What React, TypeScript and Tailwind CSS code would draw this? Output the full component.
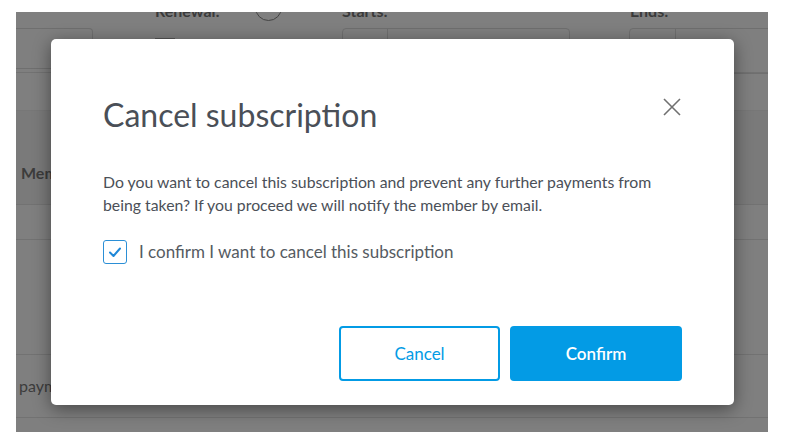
import React from "react";

export default function App() {
  return (
    <div className="w-[786px] h-[442px] bg-white pl-[16px] pt-[12px]" style={{ fontFamily: "Lato, 'Open Sans', sans-serif" }}>
      <div className="relative w-[752px] h-[420px] bg-[#7f7f7f] overflow-hidden">
        {/* dimmed page content */}
        <div className="flex flex-col">
          <div className="h-[16px] flex text-[16px] font-bold text-[#3a3a3a]">
            <div className="w-[139px] shrink-0" />
            <div className="w-[100px] shrink-0 -mt-[11px] leading-[20px]">Renewal:</div>
            <div className="shrink-0 -mt-[18px] w-[27px] h-[27px] rounded-full border border-[#444]" />
            <div className="w-[60px] shrink-0" />
            <div className="w-[288px] shrink-0 -mt-[11px] leading-[20px]">Starts:</div>
            <div className="shrink-0 -mt-[11px] leading-[20px]">Ends:</div>
          </div>
          <div className="h-[45px] flex border-b border-[#727272]">
            <div className="shrink-0 w-[77px] h-[41px] border border-l-0 border-[#6f6f6f] rounded-r-[4px]" />
            <div className="shrink-0 ml-[62px] mt-[10px] w-[20px] h-[6px] bg-[#555]" />
            <div className="shrink-0 ml-[167px] w-[228px] h-[46px] border border-[#6f6f6f] rounded-[4px] flex">
              <div className="w-[45px] border-r border-[#6f6f6f]" />
            </div>
            <div className="shrink-0 ml-[59px] w-[200px] h-[46px] border border-[#6f6f6f] rounded-[4px] flex">
              <div className="w-[46px] border-r border-[#6f6f6f]" />
            </div>
          </div>
          <div className="h-[37px]" />
          <div className="h-[95px] bg-[#7a7a7a] border-t border-[#777] border-b border-b-[#727272] flex items-center pl-[5px] pt-[30px] text-[16px] font-bold text-[#3c3c3c]">Member</div>
          <div className="h-[35px] border-b border-[#727272]" />
          <div className="h-[115px] border-b border-[#727272]" />
          <div className="h-[63px] border-b border-[#727272] flex items-center pl-[3px] text-[16px] text-[#3c3c3c]">payments</div>
        </div>

        {/* modal */}
        <div className="absolute left-[35px] top-[27px] w-[683px] h-[366px] bg-white rounded-[5px] shadow-[0_4px_18px_rgba(0,0,0,0.45)] flex flex-col pl-[52px] pr-[52px] pb-[24px]">
          <div className="flex items-start justify-between pt-[58px]">
            <h2 className="text-[32px] leading-[36px] text-[#4a4f57]">Cancel subscription</h2>
            <button className="-mr-[2px] -mt-[2px] w-[24px] h-[24px] flex items-center justify-center">
              <svg width="20" height="20" viewBox="0 0 20 20" fill="none" stroke="#707070" strokeWidth="1.6">
                <path d="M2 2 L18 18 M18 2 L2 18" />
              </svg>
            </button>
          </div>
          <p className="mt-[37px] text-[15.8px] leading-[23px] text-[#4b5058]">
            Do you want to cancel this subscription and prevent any further payments from
            <br />
            being taken? If you proceed we will notify the member by email.
          </p>
          <label className="mt-[24px] flex items-center gap-[12px]">
            <span className="w-[24px] h-[24px] rounded-[3px] border-[1.5px] border-[#2b8fd6] flex items-center justify-center">
              <svg width="16" height="16" viewBox="0 0 16 16" fill="none" stroke="#1f88d8" strokeWidth="2" strokeLinecap="round" strokeLinejoin="round">
                <path d="M3 8.5 L6.5 12 L13 4.5" />
              </svg>
            </span>
            <span className="text-[17px] leading-[24px] text-[#555b62]">I confirm I want to cancel this subscription</span>
          </label>
          <div className="mt-auto flex justify-end gap-[10px]">
            <button className="w-[161px] h-[55px] rounded-[4px] border-2 border-[#039be5] text-[#039be5] text-[17px]">Cancel</button>
            <button className="w-[172px] h-[55px] rounded-[4px] bg-[#039be5] text-white text-[17px] font-semibold">Confirm</button>
          </div>
        </div>
      </div>
    </div>
  );
}
